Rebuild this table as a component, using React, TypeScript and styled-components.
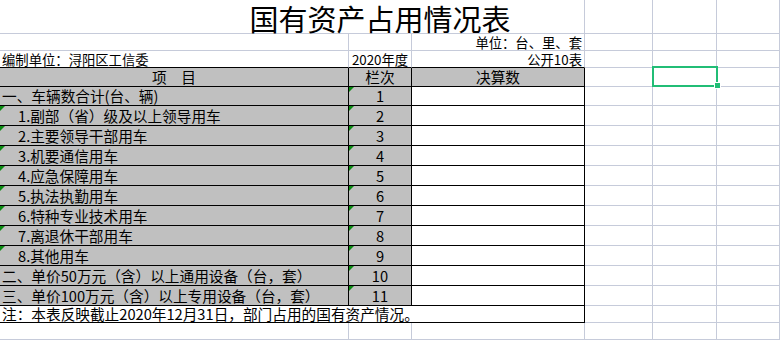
import React from "react";
import styled, { createGlobalStyle } from "styled-components";

const GRID = "#c6cbda";
const INK = "#000";
const GREEN = "#21bd76";

type Line = "grid" | "ink" | "none";
type Align = "left" | "center" | "right";

const lineColor = (l?: Line) =>
  l === "ink" ? INK : l === "none" ? "transparent" : GRID;

const GlobalStyle = createGlobalStyle`
  html, body {
    margin: 0;
    padding: 0;
    background: #fff;
  }
  body {
    font-family: "Noto Sans CJK SC", "Noto Sans", sans-serif;
    overflow: hidden;
  }
`;

const Sheet = styled.div`
  display: grid;
  grid-template-columns: 349px 63px 173px 68px 64px 1fr;
  grid-template-rows: 34px 17px 17px 19px 19px repeat(10, 20px) 17px 17px 17px;
  width: 780px;
  height: 340px;
  overflow: hidden;
  font-size: 14.67px;
  color: #000;
`;

const Cell = styled.div<{
  $span?: number;
  $fill?: boolean;
  $align?: Align;
  $indent?: number;
  $right?: Line;
  $bottom?: Line;
  $mark?: boolean;
  $active?: boolean;
  $small?: boolean;
}>`
  position: relative;
  z-index: ${({ $active }) => ($active ? 2 : "auto")};
  box-sizing: border-box;
  grid-column: span ${({ $span }) => $span ?? 1};
  display: flex;
  align-items: center;
  justify-content: ${({ $align }) =>
    $align === "center" ? "center" : $align === "right" ? "flex-end" : "flex-start"};
  padding: 1px 2px 0 ${({ $indent }) => $indent ?? 2}px;
  background: ${({ $fill }) => ($fill ? "#c0c0c0" : "#fff")};
  border-right: 1px solid ${({ $right }) => lineColor($right)};
  border-bottom: 1px solid ${({ $bottom }) => lineColor($bottom)};
  font-size: ${({ $small }) => ($small ? "13.33px" : "inherit")};
  white-space: nowrap;
  overflow-x: ${({ $active }) => ($active ? "visible" : "clip")};
  overflow-y: visible;
  line-height: 1;

  &::before {
    content: "";
    display: ${({ $mark }) => ($mark ? "block" : "none")};
    position: absolute;
    top: 0;
    left: 0;
    border-top: 5px solid #0b8a12;
    border-right: 5px solid transparent;
  }
`;

const Title = styled(Cell)`
  padding: 3px 0 0 176px;
  justify-content: center;
  font-size: 29px;
`;

const Selection = styled.div`
  position: absolute;
  left: -1px;
  top: -2px;
  width: 66px;
  height: 21px;
  box-sizing: border-box;
  border: 2px solid ${GREEN};
  pointer-events: none;

  &::after {
    content: "";
    position: absolute;
    right: -5px;
    bottom: -4px;
    width: 5px;
    height: 5px;
    background: ${GREEN};
    border: 1px solid #fff;
  }
`;

const items = [
  { label: "一、车辆数合计(台、辆)", no: "1", sub: false },
  { label: "1.副部（省）级及以上领导用车", no: "2", sub: true },
  { label: "2.主要领导干部用车", no: "3", sub: true },
  { label: "3.机要通信用车", no: "4", sub: true },
  { label: "4.应急保障用车", no: "5", sub: true },
  { label: "5.执法执勤用车", no: "6", sub: true },
  { label: "6.特种专业技术用车", no: "7", sub: true },
  { label: "7.离退休干部用车", no: "8", sub: true },
  { label: "8.其他用车", no: "9", sub: true },
  { label: "二、单价50万元（含）以上通用设备（台，套）", no: "10", sub: false },
  { label: "三、单价100万元（含）以上专用设备（台，套）", no: "11", sub: false },
];

const Blanks: React.FC<{ count?: number }> = ({ count = 3 }) => (
  <>
    {Array.from({ length: count }).map((_, i) => (
      <Cell key={i} />
    ))}
  </>
);

export default function App() {
  return (
    <>
      <GlobalStyle />
      <Sheet>
        {/* title row */}
        <Title $span={3}>国有资产占用情况表</Title>
        <Blanks />

        {/* unit row */}
        <Cell />
        <Cell />
        <Cell $small $align="right">单位：台、里、套</Cell>
        <Blanks />

        <Cell $small $bottom="ink">编制单位：浔阳区工信委</Cell>
        <Cell $small $align="center" $bottom="ink">2020年度</Cell>
        <Cell $small $align="right" $bottom="ink">公开10表</Cell>
        <Blanks />

        {/* table header */}
        <Cell $fill $align="center" $right="ink" $bottom="ink">项　目</Cell>
        <Cell $fill $align="center" $right="ink" $bottom="ink">栏次</Cell>
        <Cell $fill $align="center" $right="ink" $bottom="ink">决算数</Cell>
        <Cell />
        <Cell $active>
          <Selection />
        </Cell>
        <Cell />

        {items.map((it) => (
          <React.Fragment key={it.no}>
            <Cell $fill $indent={it.sub ? 18 : 2} $right="ink" $bottom="ink" $mark={it.sub}>
              {it.label}
            </Cell>
            <Cell $fill $align="center" $right="ink" $bottom="ink" $mark>
              {it.no}
            </Cell>
            <Cell $right="ink" $bottom="ink" />
            <Blanks />
          </React.Fragment>
        ))}

        <Cell $span={3} $right="ink" $bottom="ink">
          注：本表反映截止2020年12月31日，部门占用的国有资产情况。
        </Cell>
        <Blanks />

        <Blanks count={6} />
        <Blanks count={6} />
      </Sheet>
    </>
  );
}
